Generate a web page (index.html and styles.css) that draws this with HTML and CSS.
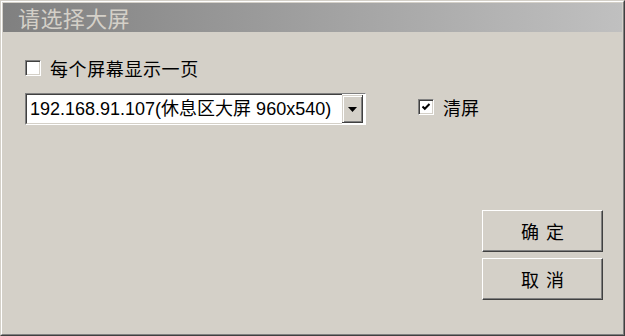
FILE: index.html
```html
<!DOCTYPE html>
<html>
<head>
<meta charset="utf-8">
<link rel="stylesheet" href="styles.css">
</head>
<body>
<div class="window">
  <div class="frame">
    <div class="titlebar"><span class="title">请选择大屏</span></div>
    <div class="content">
      <label class="row1">
        <span class="check"></span>
        <span class="label wide">每个屏幕显示一页</span>
      </label>
      <div class="row2">
        <div class="combo">
          <span class="combo-text">192.168.91.107(休息区大屏 960x540)</span>
          <span class="drop"><svg width="9" height="5" viewBox="0 0 9 5"><path d="M0 0H9L4.5 5Z" fill="#000"/></svg></span>
        </div>
        <label class="row-check">
          <span class="check"><svg width="12" height="12" viewBox="0 0 12 12"><path d="M2.5 5.5L4.8 7.8L9.5 3" fill="none" stroke="#000" stroke-width="2"/></svg></span>
          <span class="label">清屏</span>
        </label>
      </div>
      <div class="buttons">
        <div class="btn">确 定</div>
        <div class="btn">取 消</div>
      </div>
    </div>
  </div>
</div>
</body>
</html>
```
FILE: styles.css
```css
html, body {
  margin: 0;
  padding: 0;
  background: #d4d0c8;
}
.window {
  width: 625px;
  height: 336px;
  box-sizing: border-box;
  border: 1px solid;
  border-color: #d4d0c8 #404040 #404040 #d4d0c8;
  background: #d4d0c8;
}
.frame {
  height: 100%;
  box-sizing: border-box;
  border: 1px solid;
  border-color: #ffffff #808080 #808080 #ffffff;
  padding: 1px;
  display: flex;
  flex-direction: column;
}
.titlebar {
  height: 29px;
  flex: none;
  background: linear-gradient(to right, #808080, #c0c0c0);
  display: flex;
  align-items: center;
  padding-left: 15px;
}
.title {
  font-family: "Noto Sans CJK SC", sans-serif;
  font-size: 22px;
  line-height: 29px;
  color: #d4d0c8;
  font-weight: 400;
  letter-spacing: 0.4px;
}
.content {
  flex: 1;
  display: flex;
  flex-direction: column;
  padding: 27px 19px 0 22px;
  font-family: "Noto Sans CJK SC", sans-serif;
  color: #000;
}
.row1 {
  display: flex;
  align-items: center;
  height: 18px;
}
.check {
  width: 16px;
  min-width: 16px;
  height: 16px;
  box-sizing: border-box;
  border: 1px solid;
  border-color: #808080 #ffffff #ffffff #808080;
  background: #fff;
  flex: none;
  display: flex;
  align-items: center;
  justify-content: center;
  box-shadow: inset 1px 1px 0 #404040, inset -1px -1px 0 #d4d0c8;
}
.check svg { display: block; }
.label {
  font-size: 18px;
  line-height: 18px;
  margin-left: 9px;
  white-space: nowrap;
}
.wide { letter-spacing: 0.6px; }
.row2 {
  display: flex;
  margin-top: 16px;
}
.combo {
  width: 341px;
  height: 32px;
  box-sizing: border-box;
  border: 1px solid;
  border-color: #808080 #ffffff #ffffff #808080;
  background: #fff;
  display: flex;
  align-items: stretch;
}
.combo-text {
  flex: 1;
  border: 1px solid;
  border-color: #404040 #d4d0c8 #d4d0c8 #404040;
  border-right: none;
  font-family: "Liberation Sans", "Noto Sans CJK SC", sans-serif;
  font-size: 18px;
  line-height: 28px;
  padding-left: 3px;
  white-space: nowrap;
  overflow: hidden;
}
.drop {
  width: 21px;
  flex: none;
  margin: 1px 2px 1px 0;
  background: #d4d0c8;
  box-shadow: inset -1px -1px 0 #404040, inset 1px 1px 0 #d4d0c8, inset 2px 2px 0 #ffffff, inset -2px -2px 0 #808080;
  display: flex;
  align-items: center;
  justify-content: center;
}
.drop svg { display: block; }
.row-check {
  display: flex;
  align-items: center;
  margin-left: 52px;
  margin-top: 6px;
  height: 16px;
}
.row-check .label { margin-left: 9px; }
.buttons {
  align-self: flex-end;
  margin-top: 85px;
  display: flex;
  flex-direction: column;
  gap: 6px;
}
.btn {
  width: 121px;
  height: 42px;
  box-sizing: border-box;
  background: #d4d0c8;
  border: 1px solid;
  border-color: #ffffff #404040 #404040 #ffffff;
  box-shadow: inset -1px -1px 0 #808080;
  font-size: 18px;
  line-height: 40px;
  text-align: center;
  white-space: pre;
  word-spacing: 3px;
}
```
